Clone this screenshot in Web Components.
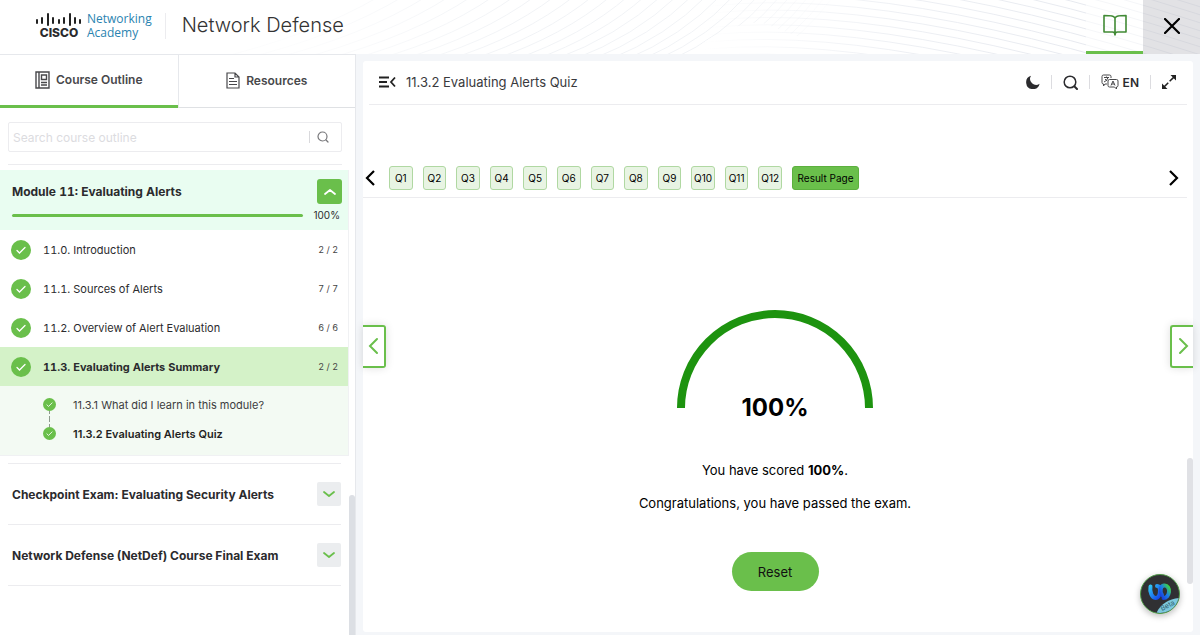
<!DOCTYPE html>
<html lang="en">
<head>
<meta charset="utf-8">
<title>Network Defense</title>
<style>
  body {
    margin: 0;
    font-family: Inter, "Liberation Sans", sans-serif;
    font-size: 12px;
    color: #2b2b2e;
    background: #f4f6f9;
    --green: #6abf4b;
    --line: #ececef;
  }
</style>
</head>
<body>
<academy-app>
  <academy-header slot="header" course="Network Defense"></academy-header>

  <course-sidebar slot="sidebar">
    <module-card slot="outline" heading="Module 11: Evaluating Alerts" progress="100">
      <outline-row label="11.0. Introduction" count="2 / 2"></outline-row>
      <outline-row label="11.1. Sources of Alerts" count="7 / 7"></outline-row>
      <outline-row label="11.2. Overview of Alert Evaluation" count="6 / 6"></outline-row>
      <outline-row label="11.3. Evaluating Alerts Summary" count="2 / 2" active></outline-row>
      <topic-list>
        <topic-row>11.3.1 What did I learn in this module?</topic-row>
        <topic-row current>11.3.2 Evaluating Alerts Quiz</topic-row>
      </topic-list>
    </module-card>
    <exam-row slot="outline">Checkpoint Exam: Evaluating Security Alerts</exam-row>
    <exam-row slot="outline">Network Defense (NetDef) Course Final Exam</exam-row>
  </course-sidebar>

  <quiz-panel slot="content">
    <panel-toolbar>11.3.2 Evaluating Alerts Quiz</panel-toolbar>
    <question-nav count="12"></question-nav>
    <quiz-result score="100"></quiz-result>
  </quiz-panel>
</academy-app>

<script>
class BaseElement extends HTMLElement {
  connectedCallback() {
    if (this.shadowRoot) return;
    this.attachShadow({ mode: 'open' });
    this.shadowRoot.innerHTML = `
      <style>
        *, *::before, *::after { box-sizing: border-box; }
        button { font: inherit; color: inherit; padding: 0; margin: 0; border: 0; background: none; cursor: pointer; }
        a { color: inherit; text-decoration: none; }
        svg { display: block; flex: none; }
      </style>
      ${this.render()}
    `;
  }
}

class AcademyApp extends BaseElement {
  render() {
    return `
      <style>
        :host { display: grid; grid-template-rows: auto 1fr; min-height: 100vh; }
        .body { display: grid; grid-template-columns: 356px 1fr; }
        main { display: grid; padding: 7px 7px 3px; }
      </style>
      <slot name="header"></slot>
      <div class="body">
        <slot name="sidebar"></slot>
        <main><slot name="content"></slot></main>
      </div>
    `;
  }
}

class AcademyHeader extends BaseElement {
  // two families of curves: a rising fan on the left, long falling arcs on the right
  waves() {
    let fan = '';
    let top = 380;
    for (let step = 24; top < 840; step = Math.max(8, step - 0.6)) {
      const reach = 170 - (top - 380) * 0.22;
      const low = top - reach;
      fan += `<path d="M${low} 60Q${low + reach * 0.6} 36 ${top} -4"/>`;
      top += step;
    }
    let arcs = '';
    for (let i = 0; i < 26; i++) {
      const y = 66 - i * 7;
      arcs += `<path d="M690 ${y + 6}Q880 ${y - 16 - i} 1240 ${y + 106 - i}"/>`;
    }
    return `
      <defs>
        <linearGradient id="fan" gradientUnits="userSpaceOnUse" x1="300" y1="0" x2="840" y2="0">
          <stop stop-color="#f1f3f6" stop-opacity=".2"/><stop offset=".4" stop-color="#f1f3f6"/><stop offset=".8" stop-color="#f1f3f6"/><stop offset="1" stop-color="#f1f3f6" stop-opacity="0"/>
        </linearGradient>
        <linearGradient id="arc" gradientUnits="userSpaceOnUse" x1="700" y1="0" x2="1200" y2="0">
          <stop stop-color="#e6e9ef" stop-opacity="0"/><stop offset=".4" stop-color="#e6e9ef" stop-opacity=".7"/><stop offset="1" stop-color="#e2e5ec"/>
        </linearGradient>
      </defs>
      <g stroke="url(#fan)">${fan}</g>
      <path d="M684 60Q715 26 760 22L860 60Z" fill="#fff"/>
      <g stroke="url(#arc)">${arcs}</g>
    `;
  }
  render() {
    const bars = [[1, 6, 4], [6, 4, 6], [12, 0, 12], [17, 4, 6], [23, 6, 4], [28, 4, 6], [34, 0, 12], [39, 4, 6], [44, 6, 4]]
      .map(([x, y, h]) => `<path d="M${x} ${y + 1}v${h - 1}"/>`).join('');
    return `
      <style>
        :host { display: block; position: relative; background: #fff; overflow: hidden; }
        .waves { position: absolute; inset: 0; width: 100%; height: 100%; }
        header { position: relative; display: flex; align-items: center; height: 54px; }
        .logo { display: flex; align-items: center; gap: 5px; margin: 0 0 3px 36px; padding-right: 13px; height: 26px; border-right: 1px solid var(--line); }
        .mark { display: grid; justify-items: center; }
        .mark b { font-size: 12px; line-height: 12px; font-weight: 800; }
        .name { font: 12px/14px "Open Sans", "Noto Sans", sans-serif; color: #2a83b0; }
        h1 { margin: 0 auto 0 16px; font-size: 20px; line-height: 26px; font-weight: 300; color: #333; padding-bottom: 4px; }
        a, button { display: grid; place-items: center; width: 57px; height: 54px; padding-bottom: 2px; }
        a { border-bottom: 3px solid var(--green); background: #fff9; }
        button { background: #cfcfd499; }
      </style>
      <svg class="waves" viewBox="0 0 1200 54" preserveAspectRatio="xMaxYMid slice" fill="none">${this.waves()}</svg>
      <header>
        <div class="logo">
          <div class="mark">
            <svg width="46" height="14" fill="none" stroke="#222" stroke-width="2" stroke-linecap="round">${bars}</svg>
            <b>CISCO</b>
          </div>
          <div class="name">Networking<br>Academy</div>
        </div>
        <h1>${this.getAttribute('course')}</h1>
        <a href="#course" aria-label="Course">
          <svg width="24" height="22" fill="none" stroke="#418a35" stroke-width="1.6" stroke-linejoin="round">
            <path d="M12 4C10.500 2 9 1.500 1 1.500V18H9.500Q12 18 12 21Q12 18 14.500 18H23V1.500C15 1.500 13.500 2 12 4V20"/>
          </svg>
        </a>
        <button type="button" aria-label="Close">
          <svg width="16" height="16" stroke="#000" stroke-width="2.2" stroke-linecap="round"><path d="M1 1L15 15M15 1L1 15"/></svg>
        </button>
      </header>
    `;
  }
}

class CourseSidebar extends BaseElement {
  render() {
    return `
      <style>
        :host { display: grid; grid-template-rows: auto 1fr; background: #fff; border: 1px solid #e6e8ec; border-width: 1px 1px 0 0; }
        nav { display: grid; grid-template-columns: 1fr 1fr; }
        nav a { display: flex; align-items: center; justify-content: center; gap: 6px; height: 53px; padding-bottom: 1px; font-size: 12px; font-weight: 600; color: #48484b; border-bottom: 1px solid #dfe1e4; }
        nav a:first-child { border-bottom: 3px solid var(--green); }
        nav a + a { border-left: 1px solid #e6e8ec; }
        .scroll { display: grid; grid-template-columns: 1fr 6px; }
        .thumb { align-self: end; height: 22vh; background: #dcdfe4; border-radius: 3px 3px 0 0; }
        form { display: flex; align-items: center; height: 30px; margin: 14px 7px 12px 8px; border: 1px solid #ececef; border-radius: 2px; }
        input { flex: 1; min-width: 0; border: 0; outline: 0; background: none; padding: 0 4px; font: inherit; color: #333; }
        input::placeholder { color: #dcdcdf; opacity: 1; }
        form button { padding: 0 12px 0 7px; border-left: 1px solid #d9d9dc; }
        hr { margin: 0 7px 5px 8px; border: 0; border-top: 1px solid var(--line); }
      </style>
      <nav>
        <a href="#outline">
          <svg width="15" height="18" fill="none" stroke="#48484b" stroke-width="1.4">
            <path d="M1 1h13v16H1zM4 1v16M6.500 4h5v4.500h-5zM6 11.500h6M6 14h6"/>
          </svg>
          Course Outline
        </a>
        <a href="#resources">
          <svg width="14" height="17" fill="none" stroke="#48484b" stroke-width="1.2">
            <path d="M1 1h8l4 4v11H1zM9 1v4h4M3 6.500h5M3 9.500h8M3 12.500h8"/>
          </svg>
          Resources
        </a>
      </nav>
      <div class="scroll">
        <div>
          <form>
            <input type="text" placeholder="Search course outline" aria-label="Search course outline">
            <button type="button" aria-label="Search">
              <svg width="12" height="12" fill="none" stroke="#77777a" stroke-width="1.2" stroke-linecap="round"><circle cx="5.500" cy="5.500" r="4.500"/><path d="M9 9l2 2"/></svg>
            </button>
          </form>
          <hr>
          <slot name="outline"></slot>
        </div>
        <div class="thumb"></div>
      </div>
    `;
  }
}

class ModuleCard extends BaseElement {
  render() {
    const progress = this.getAttribute('progress');
    return `
      <style>
        :host { display: block; border: 1px solid #f0f1f3; border-width: 0 1px 1px 0; margin-bottom: 7px; font-variant-numeric: tabular-nums; }
        .top { background: #e9fdf1; height: 60px; padding: 9px 6px 0 12px; }
        .title { display: flex; align-items: center; justify-content: space-between; }
        h2 { margin: 0; font-size: 12px; line-height: 20px; font-weight: 700; }
        .title button { display: grid; place-items: center; width: 25px; height: 25px; border-radius: 3px; background: var(--green); }
        .bar { display: flex; align-items: center; gap: 10px; font-size: 10px; line-height: 22px; padding-right: 2px; font-variant-numeric: normal; }
        .track { flex: 1; height: 3px; border-radius: 2px; background: #fff; }
        .fill { height: 100%; width: ${progress}%; border-radius: 2px; background: var(--green); }
      </style>
      <div class="top">
        <div class="title">
          <h2>${this.getAttribute('heading')}</h2>
          <button type="button" aria-label="Collapse">
            <svg width="14" height="8" fill="none" stroke="#fff" stroke-width="1.8" stroke-linecap="round" stroke-linejoin="round"><path d="M2 6l5-4 5 4"/></svg>
          </button>
        </div>
        <div class="bar"><div class="track"><div class="fill"></div></div>${progress}%</div>
      </div>
      <slot></slot>
    `;
  }
}

const check = size => `
  <svg width="${size}" height="${size}" viewBox="0 0 20 20" fill="none">
    <circle cx="10" cy="10" r="10" fill="#6abf4b"/>
    <path d="M6 10.500l2.500 2.500 5.500-5.500" stroke="#fff" stroke-width="1.3" stroke-linecap="round"/>
  </svg>`;

class OutlineRow extends BaseElement {
  render() {
    return `
      <style>
        :host { display: block; }
        a { display: flex; align-items: center; gap: 12px; height: 39px; padding: 0 10px 0 11px; font-size: 11px; }
        span { margin-left: auto; font-size: 9px; color: #444; }
        b { font-weight: 400; }
        :host([active]) a { background: #d4f2c8; }
        :host([active]) b { font-weight: 700; }
      </style>
      <a href="#section">${check(20)}<b>${this.getAttribute('label')}</b><span>${this.getAttribute('count')}</span></a>
    `;
  }
}

class TopicList extends BaseElement {
  render() {
    return `
      <style>
        :host { display: block; background: #f3faf3; padding: 4px 0 7px 43px; font-variant-numeric: normal; }
      </style>
      <slot></slot>
    `;
  }
}

class TopicRow extends BaseElement {
  render() {
    return `
      <style>
        :host { display: block; font-size: 11px; color: #3c3c40; }
        :host([current]) { font-weight: 600; color: #1f1f22; }
        a { display: flex; align-items: center; gap: 17px; height: 29px; }
        .dot { display: grid; grid-template-rows: 1fr 13px 1fr; height: 100%; }
        .dot i { justify-self: center; border-left: 1px dashed #8d9a8d; }
        :host([current]) .dot i:last-child, :host(:not([current])) .dot i:first-child { visibility: hidden; }
      </style>
      <a href="#topic"><span class="dot"><i></i>${check(13)}<i></i></span><slot></slot></a>
    `;
  }
}

class ExamRow extends BaseElement {
  render() {
    return `
      <style>
        :host { display: block; margin: 0 8px; border-top: 1px solid var(--line); }
        :host(:last-of-type) { border-bottom: 1px solid var(--line); }
        div { display: flex; align-items: center; justify-content: space-between; height: 60px; padding-left: 4px; font-size: 12px; font-weight: 700; }
        button { display: grid; place-items: center; width: 24px; height: 24px; border-radius: 2px; background: #ebedef; }
      </style>
      <div>
        <slot></slot>
        <button type="button" aria-label="Expand">
          <svg width="14" height="8" fill="none" stroke="#6abf4b" stroke-width="1.8" stroke-linecap="round" stroke-linejoin="round"><path d="M2 2l5 4 5-4"/></svg>
        </button>
      </div>
    `;
  }
}

class QuizPanel extends BaseElement {
  render() {
    return `
      <style>
        :host { display: block; position: relative; background: #fff; border-radius: 3px; }
        .side { position: absolute; top: calc(50% - 22px); display: grid; place-items: center; width: 23px; height: 43px; background: #fff; border: 2px solid var(--green); box-shadow: 0 0 8px #0002; }
        .prev { left: 0; border-left: 0; border-radius: 0 3px 3px 0; }
        .next { right: 0; border-right: 0; border-radius: 3px 0 0 3px; }
        .thumb { position: absolute; right: 0; bottom: 48px; width: 6px; height: 22%; border-radius: 3px; background: #e0e1e5; }
        .bot { position: absolute; right: 13px; bottom: 18px; border-radius: 50%; box-shadow: 0 2px 6px #0004; }
      </style>
      <slot></slot>
      <button class="side prev" type="button" aria-label="Previous">
        <svg width="12" height="18" fill="none" stroke="#6abf4b" stroke-width="2" stroke-linecap="round"><path d="M9 2L2 9l7 7"/></svg>
      </button>
      <button class="side next" type="button" aria-label="Next">
        <svg width="12" height="18" fill="none" stroke="#6abf4b" stroke-width="2" stroke-linecap="round"><path d="M3 2l7 7-7 7"/></svg>
      </button>
      <div class="thumb"></div>
      <button class="bot" type="button" aria-label="Assistant">
        <svg width="40" height="40" viewBox="0 0 40 40" fill="none">
          <defs>
            <linearGradient id="l" x1="0" y1="0" x2="1" y2="1"><stop stop-color="#2fc4f5"/><stop offset="1" stop-color="#1340e8"/></linearGradient>
            <linearGradient id="r" x1="1" y1="0" x2="0" y2="1"><stop stop-color="#3ddc3a"/><stop offset=".5" stop-color="#1b7ae8"/><stop offset="1" stop-color="#1735d8"/></linearGradient>
            <clipPath id="c"><circle cx="20" cy="20" r="19"/></clipPath>
          </defs>
          <circle cx="20" cy="20" r="19.500" fill="#303033" stroke="#4f9a48"/>
          <g stroke-width="4" stroke-linecap="round">
            <path d="M10.500 12.500C9.500 18 12 24 15.500 24S20 19 20 16s-1-4-3-4" stroke="url(#l)"/>
            <path d="M22 21C19.500 17 20.500 12 24 11.500S29.500 15 29 18 26.500 24 23.500 24" stroke="url(#r)"/>
          </g>
          <g clip-path="url(#c)">
            <path d="M16 40C20 30 29 25 40 24V40Z" fill="#7cc9dd"/>
            <text x="22" y="37" transform="rotate(-27 22 37)" font-family="Inter, sans-serif" font-size="7" fill="#2f5f70">Beta</text>
          </g>
        </svg>
      </button>
    `;
  }
}

class PanelToolbar extends BaseElement {
  render() {
    return `
      <style>
        :host { display: block; padding: 0 6px; }
        div { display: flex; align-items: center; height: 44px; padding: 0 11px 1px 10px; border-bottom: 1px solid var(--line); }
        h2 { margin: 0 auto 0 10px; font-size: 13px; line-height: 20px; font-weight: 400; color: #3a3a3d; }
        button { display: flex; align-items: center; gap: 4px; font-size: 12px; font-weight: 600; }
        i { width: 1px; height: 14px; margin: 0 11px; background: #dcdce0; }
      </style>
      <div>
        <svg width="17" height="12" fill="none" stroke="#222" stroke-width="1.8"><path d="M0 1.500h10M0 6h8M0 10.500h10M16 1.500L12 6l4 4.500"/></svg>
        <h2><slot></slot></h2>
        <button type="button" aria-label="Dark mode">
          <svg width="14" height="14" fill="#2b2b2e"><path d="M5 .8A6.800 6.800 0 1 0 13.600 8.800 6 6 0 0 1 5 .8Z"/></svg>
        </button>
        <i></i>
        <button type="button" aria-label="Search">
          <svg width="15" height="15" fill="none" stroke="#2b2b2e" stroke-width="1.5" stroke-linecap="round"><circle cx="7" cy="7" r="5.800"/><path d="M11.500 11.500l2.500 2.500" stroke-width="2"/></svg>
        </button>
        <i></i>
        <button type="button">
          <svg width="18" height="16" fill="none" stroke="#48484b" stroke-linejoin="round">
            <path d="M6 10H4L2.500 12V10Q1 10 1 8.500V2.500Q1 1 2.500 1H8.500Q10 1 10 2.500V4M3 3.500h5M5.500 2.500v1M7 3.500Q6 7 3 8M4 5L6 7M8.500 5.500H15.500Q17 5.500 17 7V11.500Q17 13 15.500 13V15L13.500 13H8.500Q7 13 7 11.500V7Q7 5.500 8.500 5.500ZM10 11.500L12 7l2 4.500M10.700 10h2.600"/>
          </svg>
          EN
        </button>
        <i></i>
        <button type="button" aria-label="Full screen">
          <svg width="14" height="14" fill="#222"><path d="M8.500 0H14V5.500ZM0 8.500V14H5.500Z"/><path d="M2 12L12 2" stroke="#222" stroke-width="1.500" stroke-dasharray="6 2"/></svg>
        </button>
      </div>
    `;
  }
}

class QuestionNav extends BaseElement {
  render() {
    const count = Number(this.getAttribute('count'));
    const chips = Array.from({ length: count }, (_, i) => `<button class="chip" type="button">Q${i + 1}</button>`).join('');
    return `
      <style>
        :host { display: block; padding: 61px 6px 0 0; }
        nav { display: flex; align-items: center; gap: 10px; padding: 0 8px 7px 2px; border-bottom: 1px solid var(--line); }
        .chips { display: grid; grid-template-columns: repeat(${count}, 1fr); gap: 10px; width: 393px; margin-left: 3px; }
        .chip, .result { height: 24px; border-radius: 3px; font-size: 10px; font-weight: 400; color: #000; white-space: nowrap; }
        .chip { display: flex; align-items: center; justify-content: center; min-width: 0; border: 1px solid #b0d8a2; background: #e8f4e3; }
        .result { width: 67px; margin-right: auto; background: var(--green); border: 1px solid #5cb03e; }
      </style>
      <nav>
        <button type="button" aria-label="Scroll left">
          <svg width="11" height="16" fill="none" stroke="#000" stroke-width="2.200"><path d="M9 1L2 8l7 7"/></svg>
        </button>
        <div class="chips">${chips}</div>
        <button class="result" type="button">Result Page</button>
        <button type="button" aria-label="Scroll right">
          <svg width="11" height="16" fill="none" stroke="#000" stroke-width="2.200"><path d="M2 1l7 7-7 7"/></svg>
        </button>
      </nav>
    `;
  }
}

class QuizResult extends BaseElement {
  render() {
    const score = this.getAttribute('score');
    return `
      <style>
        :host { display: flex; flex-direction: column; align-items: center; padding: 111px 6px 40px 0; font-size: 13px; line-height: 20px; color: #000; }
        .gauge { display: grid; justify-items: center; margin-bottom: 38px; }
        .gauge > * { grid-area: 1 / 1; }
        .gauge strong { align-self: end; font-size: 24px; line-height: 28px; padding-top: 85px; font-weight: 700; }
        p { margin: 0 0 13px; }
        button { width: 87px; height: 39px; margin-top: 26px; border-radius: 20px; background: var(--green); color: #111; }
      </style>
      <div class="gauge">
        <svg width="198" height="100" fill="none"><path d="M5 99A94 94 0 0 1 193 99" stroke="#1d930f" stroke-width="8"/></svg>
        <strong>${score}%</strong>
      </div>
      <p>You have scored <b>${score}%</b>.</p>
      <p>Congratulations, you have passed the exam.</p>
      <button type="button">Reset</button>
    `;
  }
}

customElements.define('academy-app', AcademyApp);
customElements.define('academy-header', AcademyHeader);
customElements.define('course-sidebar', CourseSidebar);
customElements.define('module-card', ModuleCard);
customElements.define('outline-row', OutlineRow);
customElements.define('topic-list', TopicList);
customElements.define('topic-row', TopicRow);
customElements.define('exam-row', ExamRow);
customElements.define('quiz-panel', QuizPanel);
customElements.define('panel-toolbar', PanelToolbar);
customElements.define('question-nav', QuestionNav);
customElements.define('quiz-result', QuizResult);
</script>
</body>
</html>
